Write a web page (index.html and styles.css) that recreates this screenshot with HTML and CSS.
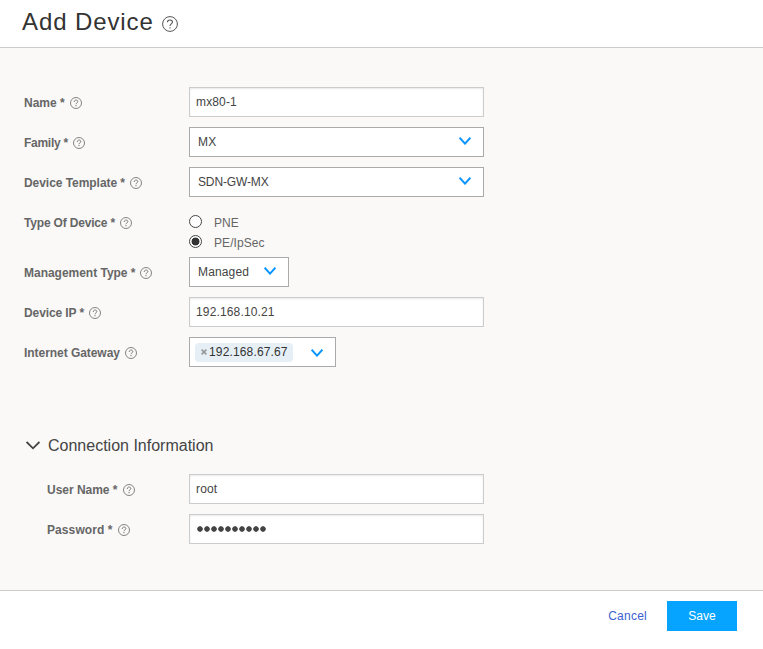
FILE: index.html
```html
<!DOCTYPE html>
<html lang="en">
<head>
<meta charset="utf-8">
<title>Add Device</title>
<link rel="stylesheet" href="styles.css">
</head>
<body>
<svg width="0" height="0" class="defs">
  <symbol id="help" viewBox="0 0 12 12"><circle cx="6" cy="6" r="5.5" fill="none" stroke="currentColor" stroke-width=".9"/><path d="M4.2 4.9C4.2 2.5 7.8 2.5 7.8 4.6C7.8 5.9 6 5.8 6 7.2M6 8V9.2" fill="none" stroke="currentColor" stroke-width="1"/></symbol>
  <symbol id="help-lg" viewBox="0 0 16 16"><circle cx="8" cy="8" r="7.4" fill="none" stroke="currentColor" stroke-width="1"/><path d="M5.4 6.3C5.4 3.2 10.5 3.2 10.5 6.1C10.5 7.9 8 7.8 8 10M8 11.2V12.5" fill="none" stroke="currentColor" stroke-width="1.1"/></symbol>
  <symbol id="chevron" viewBox="0 0 12 8"><path d="M.6 .8L6 6.6L11.4 .8" fill="none" stroke="currentColor" stroke-width="2"/></symbol>
</svg>
<header class="header"><h1>Add Device</h1><svg class="help-lg"><use href="#help-lg"/></svg></header>
<main class="content">
  <div class="row"><div class="label"><span>Name *</span><svg class="help"><use href="#help"/></svg></div><div class="field input">mx80-1</div></div>
  <div class="row"><div class="label tightest"><span>Family *</span><svg class="help"><use href="#help"/></svg></div><div class="field select"><span>MX</span><svg class="chevron"><use href="#chevron"/></svg></div></div>
  <div class="row"><div class="label snug"><span>Device Template *</span><svg class="help"><use href="#help"/></svg></div><div class="field select"><span class="template">SDN-GW-MX</span><svg class="chevron"><use href="#chevron"/></svg></div></div>
  <div class="row"><div class="label tighter"><span>Type Of Device *</span><svg class="help"><use href="#help"/></svg></div>
    <div class="radios">
      <div class="option"><i class="radio"></i><span>PNE</span></div>
      <div class="option"><i class="radio checked"></i><span>PE/IpSec</span></div>
    </div>
  </div>
  <div class="row"><div class="label"><span>Management Type *</span><svg class="help"><use href="#help"/></svg></div><div class="field select small"><span class="managed">Managed</span><svg class="chevron"><use href="#chevron"/></svg></div></div>
  <div class="row"><div class="label tight"><span>Device IP *</span><svg class="help"><use href="#help"/></svg></div><div class="field input">192.168.10.21</div></div>
  <div class="row"><div class="label snug"><span>Internet Gateway</span><svg class="help"><use href="#help"/></svg></div><div class="field select multi"><div class="tag"><svg class="remove" viewBox="0 0 6 6"><path d="M.6 .6L5.4 5.4M5.4 .6L.6 5.4" fill="none" stroke="currentColor" stroke-width="1.6"/></svg><span>192.168.67.67</span></div><svg class="chevron"><use href="#chevron"/></svg></div></div>
  <div class="section"><svg class="toggle" viewBox="0 0 14 9"><path d="M.6 1L7 7.3L13.4 1" fill="none" stroke="currentColor" stroke-width="1.8"/></svg><h2>Connection Information</h2></div>
  <div class="row nested"><div class="label"><span>User Name *</span><svg class="help"><use href="#help"/></svg></div><div class="field input">root</div></div>
  <div class="row nested"><div class="label loose"><span>Password *</span><svg class="help"><use href="#help"/></svg></div><div class="field input password"><i></i><i></i><i></i><i></i><i></i><i></i><i></i><i></i><i></i><i></i></div></div>
</main>
<footer class="footer"><a class="cancel">Cancel</a><div class="save">Save</div></footer>
</body>
</html>
```

FILE: styles.css
```css
* { box-sizing: border-box; }
body { margin: 0; height: 649px; display: flex; flex-direction: column; overflow: hidden; background: #fff; font: 12px/16px "Liberation Sans", Arial, sans-serif; color: #444; }
svg { display: block; flex: none; }
.defs { display: none; }
.header { height: 48px; flex: none; display: flex; align-items: flex-start; padding-left: 22px; border-bottom: 1px solid #ccc; }
h1 { width: 133px; margin: 8px 0 0; font-size: 24px; line-height: 28px; font-weight: 400; letter-spacing: .9px; white-space: nowrap; color: #333; }
.help-lg { width: 16px; height: 16px; margin: 16px 0 0 7px; color: #555; }
.content { height: 542px; flex: none; padding: 39px 0 0 24px; background: #faf9f8; }
.row { display: flex; margin-bottom: 10px; }
.label { width: 165px; height: 30px; padding-top: 2px; display: flex; align-items: center; gap: 5px; font-weight: 700; letter-spacing: -.02px; color: #666; }
.snug { letter-spacing: -.05px; }
.tight { letter-spacing: -.1px; }
.tighter { letter-spacing: -.18px; }
.tightest { letter-spacing: -.28px; }
.loose { letter-spacing: .09px; }
.help { width: 12px; height: 12px; color: #777; }
.field { width: 295px; height: 30px; background: #fff; display: flex; align-items: center; letter-spacing: .15px; }
.input { border: 1px solid #ccc; box-shadow: inset 0 1px 2px rgba(0,0,0,.09); padding: 0 6px; }
.select { border: 1px solid #aaa; padding: 0 12px 0 8px; justify-content: space-between; }
.template { letter-spacing: -.14px; }
.chevron { width: 12px; height: 8px; color: #0a94ff; margin-top: -2px; }
.small { width: 100px; }
.managed { letter-spacing: .15px; }
.multi { width: 147px; padding-left: 5px; }
.multi .chevron { margin-top: 1px; }
.tag { display: flex; align-items: center; height: 19px; width: 98px; padding-left: 6px; gap: 2px; background: #e6eff5; border-radius: 4px; color: #333; }
.remove { width: 6px; height: 6px; color: #999; }
.radios { height: 40px; }
.option { height: 20px; display: flex; align-items: center; gap: 12px; color: #666; }
.option span { padding-top: 12px; letter-spacing: .08px; }
.radio { width: 13px; height: 13px; margin-top: 9px; border: 1px solid #444; border-radius: 50%; background: #fff; }
.checked { background: radial-gradient(circle, #333 3.6px, #fff 4.3px); }
.section { display: flex; align-items: center; gap: 8px; height: 20px; margin: 68px 0 19px 2px; color: #444; }
.toggle { width: 14px; height: 9px; }
h2 { margin: 0; padding-top: 2px; font-size: 16px; line-height: 20px; font-weight: 400; }
.nested .label { padding-left: 23px; }
.password { gap: 1px; padding-left: 7px; }
.password i { width: 6px; height: 6px; background: radial-gradient(circle, #444 2.4px, transparent 3.1px); }
.footer { flex: 1; display: flex; align-items: flex-start; justify-content: flex-end; padding: 10px 26px 0 0; border-top: 1px solid #ccc; }
.cancel { line-height: 30px; margin-right: 20px; color: #3b5fd0; letter-spacing: .25px; }
.save { width: 70px; height: 30px; line-height: 30px; text-align: center; background: #06a4ff; color: #fff; }
```
